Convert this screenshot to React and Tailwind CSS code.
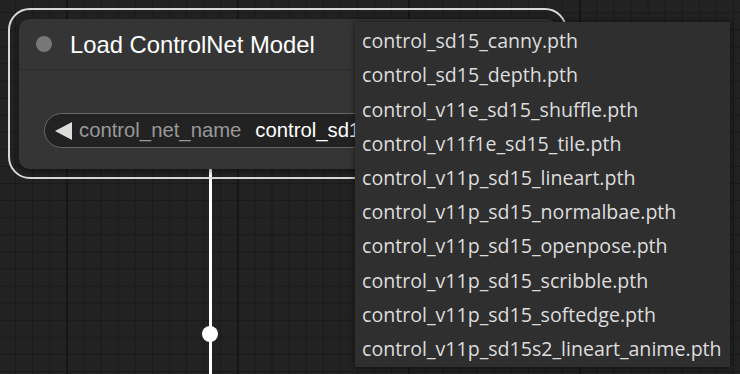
import React from "react";

const items = [
  "control_sd15_canny.pth",
  "control_sd15_depth.pth",
  "control_v11e_sd15_shuffle.pth",
  "control_v11f1e_sd15_tile.pth",
  "control_v11p_sd15_lineart.pth",
  "control_v11p_sd15_normalbae.pth",
  "control_v11p_sd15_openpose.pth",
  "control_v11p_sd15_scribble.pth",
  "control_v11p_sd15_softedge.pth",
  "control_v11p_sd15s2_lineart_anime.pth",
];

export default function App() {
  return (
    <div className="relative w-[740px] h-[374px] overflow-hidden bg-[#222222] font-['Liberation_Sans',Arial,sans-serif]">
      {/* grid */}
      <div className="absolute inset-0 bg-[linear-gradient(to_right,#1a1a1a_1px,transparent_1px),linear-gradient(to_bottom,#1a1a1a_1px,transparent_1px)] bg-[size:17.1px_17.1px] bg-[position:-2px_-5px]" />
      <div className="absolute inset-0 bg-[linear-gradient(to_right,#161616_2px,transparent_2px)] bg-[size:171px_171px] bg-[position:66px_0px]" />

      {/* link */}
      <div className="absolute left-[209px] top-[168px] w-[3px] h-[210px] bg-white" />
      <div className="absolute left-[202px] top-[326px] w-[16px] h-[16px] rounded-full bg-white" />

      {/* selection outline */}
      <div className="absolute left-[8px] top-[8px] w-[559px] h-[171px] rounded-[22px] border-2 border-[#d8d8d8]" />

      {/* node */}
      <div className="absolute left-[19px] top-[19px] w-[538px] h-[150px] rounded-[10px] bg-[#353535] shadow-[0_2px_6px_rgba(0,0,0,0.5)] flex flex-col">
        <div className="h-[51px] flex items-center border-b border-[#2b2b2b]">
          <div className="ml-[17px] w-[16px] h-[16px] rounded-full bg-[#777777]" />
          <div className="ml-[18px] mt-[2px] text-[23.8px] text-white leading-none">Load ControlNet Model</div>
        </div>
        <div className="flex-1 pt-[43px] px-[25px]">
          <div className="h-[35px] rounded-full border border-[#666666] bg-[#222222] flex items-center pl-[10px] overflow-hidden">
            <svg width="17" height="18" viewBox="0 0 17 18" className="shrink-0">
              <polygon points="0,9 17,0 17,18" fill="#dddddd" />
            </svg>
            <span className="ml-[7px] text-[20.3px] text-[#999999] leading-none whitespace-nowrap">control_net_name</span>
            <span className="ml-[14px] text-[20.3px] text-white leading-none whitespace-nowrap">control_sd15_canny.pth</span>
          </div>
        </div>
      </div>

      {/* menu */}
      <div className="absolute left-[355px] top-[22px] w-[375px] bg-[#2f2f2f] shadow-[0_0_6px_rgba(0,0,0,0.6)] pt-[2px] pb-[1px] font-['Open_Sans','Noto_Sans',sans-serif]">
        {items.map((t) => (
          <div key={t} className="h-[34.2px] flex items-center pl-[7px] text-[19.6px] text-[#dddddd] leading-none whitespace-nowrap">
            {t}
          </div>
        ))}
      </div>
    </div>
  );
}
